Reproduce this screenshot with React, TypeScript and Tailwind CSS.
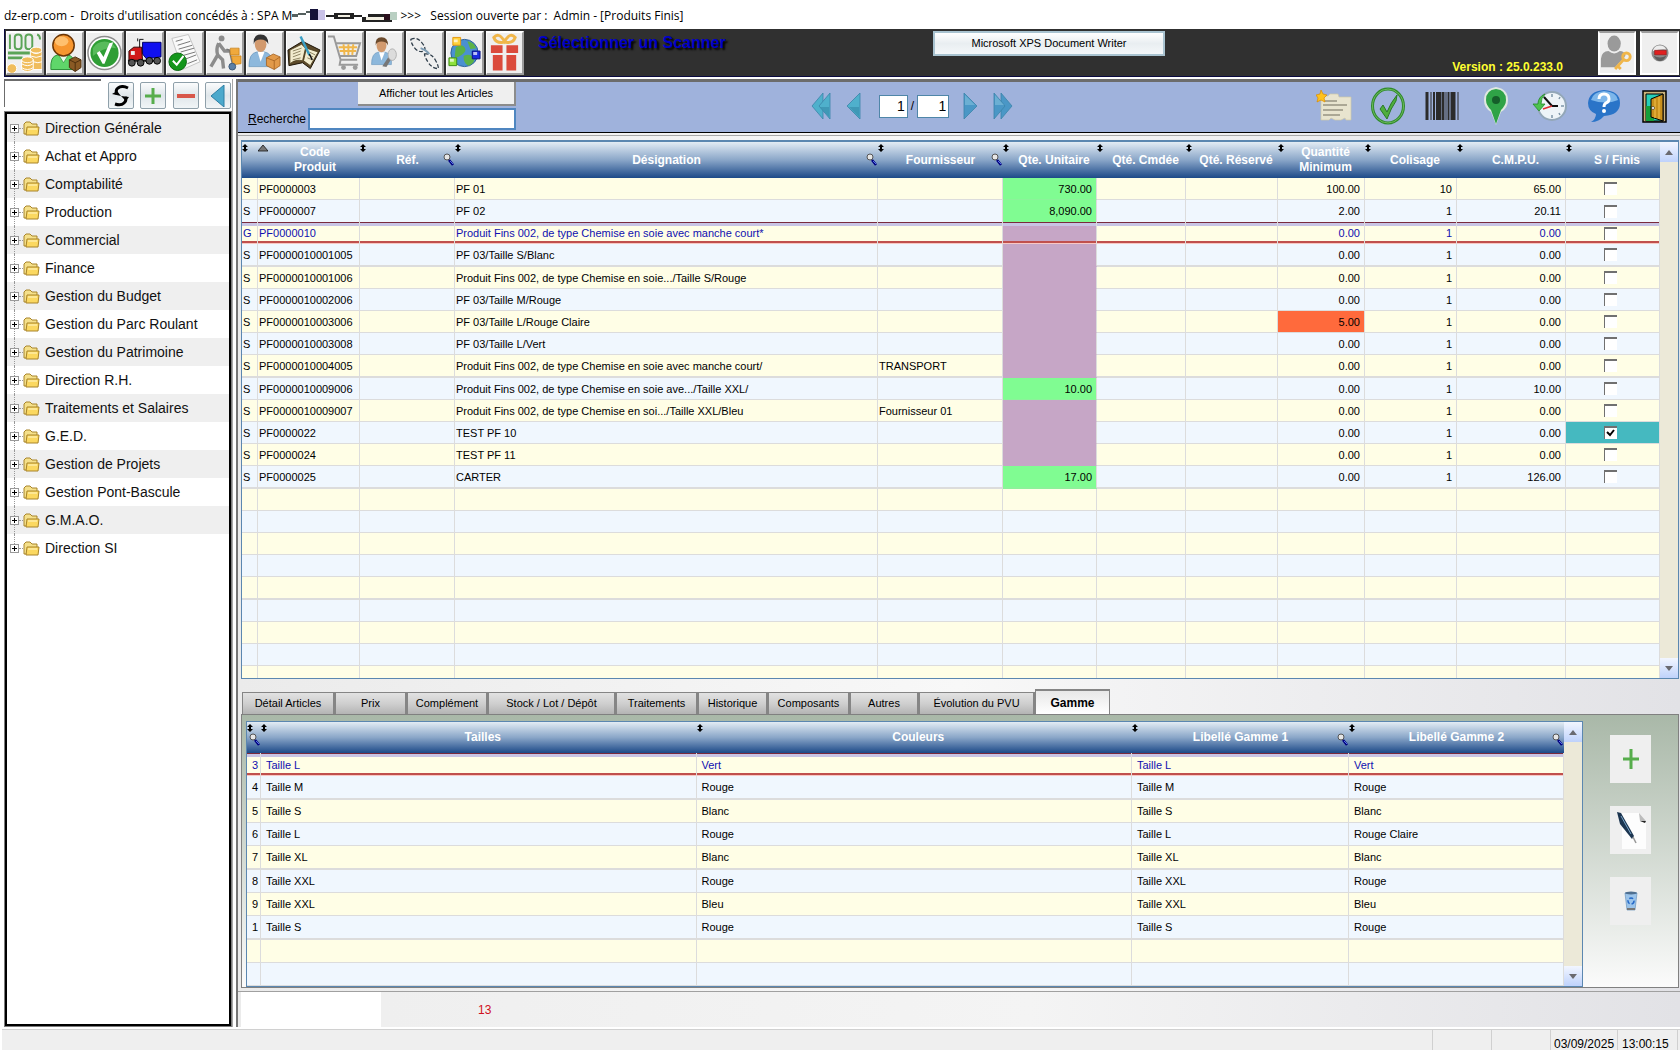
import { ReactNode, useState } from 'react'
import clsx from 'clsx'

type Product = {
  kind: string
  code: string
  label: string
  supplier?: string
  qty?: string
  min?: string
  pack?: string
  cost?: string
  done?: boolean
}

const products: Product[] = [
  { kind: 'S', code: 'PF0000003', label: 'PF 01', qty: '730.00', min: '100.00', pack: '10', cost: '65.00' },
  { kind: 'S', code: 'PF0000007', label: 'PF 02', qty: '8,090.00', min: '2.00', cost: '20.11' },
  { kind: 'G', code: 'PF0000010', label: 'Produit Fins 002, de type Chemise en soie avec manche court*' },
  { kind: 'S', code: 'PF0000010001005', label: 'PF 03/Taille S/Blanc' },
  { kind: 'S', code: 'PF0000010001006', label: 'Produit Fins 002, de type Chemise en soie.../Taille S/Rouge' },
  { kind: 'S', code: 'PF0000010002006', label: 'PF 03/Taille M/Rouge' },
  { kind: 'S', code: 'PF0000010003006', label: 'PF 03/Taille L/Rouge Claire', min: '5.00' },
  { kind: 'S', code: 'PF0000010003008', label: 'PF 03/Taille L/Vert' },
  { kind: 'S', code: 'PF0000010004005', label: 'Produit Fins 002, de type Chemise en soie avec manche court/', supplier: 'TRANSPORT' },
  { kind: 'S', code: 'PF0000010009006', label: 'Produit Fins 002, de type Chemise en soie ave.../Taille XXL/', qty: '10.00', cost: '10.00' },
  { kind: 'S', code: 'PF0000010009007', label: 'Produit Fins 002, de type Chemise en soi.../Taille XXL/Bleu', supplier: 'Fournisseur 01' },
  { kind: 'S', code: 'PF0000022', label: 'TEST PF 10', done: true },
  { kind: 'S', code: 'PF0000024', label: 'TEST PF 11' },
  { kind: 'S', code: 'PF0000025', label: 'CARTER', qty: '17.00', cost: '126.00' },
]

const variants = [
  ['3', 'Taille L', 'Vert', 'Taille L', 'Vert'],
  ['4', 'Taille M', 'Rouge', 'Taille M', 'Rouge'],
  ['5', 'Taille S', 'Blanc', 'Taille S', 'Blanc'],
  ['6', 'Taille L', 'Rouge', 'Taille L', 'Rouge Claire'],
  ['7', 'Taille XL', 'Blanc', 'Taille XL', 'Blanc'],
  ['8', 'Taille XXL', 'Rouge', 'Taille XXL', 'Rouge'],
  ['9', 'Taille XXL', 'Bleu', 'Taille XXL', 'Bleu'],
  ['1', 'Taille S', 'Rouge', 'Taille S', 'Rouge'],
  ['', '', '', '', ''],
  ['', '', '', '', ''],
]

const departments = [
  'Direction Générale',
  'Achat et Appro',
  'Comptabilité',
  'Production',
  'Commercial',
  'Finance',
  'Gestion du Budget',
  'Gestion du Parc Roulant',
  'Gestion du Patrimoine',
  'Direction R.H.',
  'Traitements et Salaires',
  'G.E.D.',
  'Gestion de Projets',
  'Gestion Pont-Bascule',
  'G.M.A.O.',
  'Direction SI',
]

type Column = { title: string; width: string; search?: boolean; sorted?: boolean; label?: string }

const productColumns: Column[] = [
  { title: '', width: 'w-[16px]' },
  { title: 'Code Produit', width: 'w-[102px]', sorted: true, label: 'pl-9 pr-6' },
  { title: 'Réf.', width: 'w-[95px]', search: true },
  { title: 'Désignation', width: '', search: true },
  { title: 'Fournisseur', width: 'w-[125px]', search: true },
  { title: 'Qte. Unitaire', width: 'w-[94px]', label: 'pl-2' },
  { title: 'Qté. Cmdée', width: 'w-[89px]', label: 'pl-2' },
  { title: 'Qté. Réservé', width: 'w-[92px]', label: 'pl-2' },
  { title: 'Quantité Minimum', width: 'w-[87px]', label: 'pl-5 pr-3' },
  { title: 'Colisage', width: 'w-[92px]', label: 'pl-2' },
  { title: 'C.M.P.U.', width: 'w-[109px]', label: 'pl-2' },
  { title: 'S / Finis', width: 'w-[94px]', label: 'pl-2' },
]

const variantColumns: Column[] = [
  { title: '', width: 'w-[14px]', search: true },
  { title: 'Tailles', width: '', label: 'pl-2' },
  { title: 'Couleurs', width: '', label: 'pl-2' },
  { title: 'Libellé Gamme 1', width: 'w-[217px]', search: true },
  { title: 'Libellé Gamme 2', width: 'w-[215px]', search: true },
]

const tabs = [
  { title: 'Détail Articles', width: 'w-[93px]' },
  { title: 'Prix', width: 'w-[72px]' },
  { title: 'Complément', width: 'w-[81px]' },
  { title: 'Stock / Lot / Dépôt', width: 'w-[128px]' },
  { title: 'Traitements', width: 'w-[82px]' },
  { title: 'Historique', width: 'w-[70px]' },
  { title: 'Composants', width: 'w-[82px]' },
  { title: 'Autres', width: 'w-[69px]' },
  { title: 'Évolution du PVU', width: 'w-[116px]' },
  { title: 'Gamme', width: 'w-[75px]' },
]

const selectedCell =
  'text-[#1010b0] shadow-[inset_0_1px_#7a2a3c,inset_0_4px_#c8c4e4,inset_0_-1px_#f8c8c4,inset_0_-3px_#c0504d]'

/* ---------- toolbar drawings ---------- */

function Svg({ children, className = 'size-9', box = '0 0 36 40' }: { children: ReactNode; className?: string; box?: string }) {
  return (
    <svg viewBox={box} className={className} fill="none" aria-hidden="true">
      {children}
    </svg>
  )
}

const MoneyIcon = () => (
  <Svg className="h-10 w-9">
    <path d="M3 1v15M8 4q0-3 3.500-3t3.500 3v9q0 3-3.500 3t-3.500-3zM19 4q0-3 3.500-3t3.500 3v9q0 3-3.500 3t-3.500-3zM31 1q3 1 3 5" stroke="#5ba457" strokeWidth="2" />
    <path d="M1 20h24M1 25h15" stroke="#5ba457" strokeWidth="3" />
    <g fill="#f0bd5c" stroke="#fff" strokeWidth="1">
      <path d="M24 18v19h12V18q-6 5-12 0z" />
      <ellipse cx="30" cy="17" rx="6" ry="3" />
      <path d="M15 27v10q6 4 12 0V27z" />
      <ellipse cx="21" cy="27" rx="6" ry="3" />
      <path d="M15 31q6 4 12 0M15 35q6 4 12 0M24 23q6 3 12 0M27 29q5 2 9 0" />
      <circle cx="5" cy="36" r="5" />
    </g>
  </Svg>
)

const BuyerIcon = () => (
  <Svg className="h-10 w-9">
    <path d="M4 37q-1-14 7-15h10q7 1 7 9v6z" fill="#5fd66a" stroke="#2b8f38" />
    <path d="m12 22 5 8 5-8z" fill="#eafbe9" stroke="#2b8f38" strokeWidth=".7" />
    <ellipse cx="17" cy="12" rx="11" ry="11" fill="#f7962f" stroke="#6b3606" strokeWidth="1.500" />
    <ellipse cx="15" cy="8" rx="7" ry="5" fill="#ffc06f" />
    <path d="m23 27 6-3 6 3v8l-6 4-6-4z" fill="#8a5a24" stroke="#4d2f0e" />
    <path d="m23 27 6 3 6-3M29 30v9" stroke="#4d2f0e" />
  </Svg>
)

const RoundCheckIcon = () => (
  <Svg className="h-10 w-9">
    <circle cx="18" cy="20" r="17" fill="#fff" stroke="#8d8d8d" strokeWidth="1.500" />
    <circle cx="18" cy="20" r="14.500" fill="#2f9e35" />
    <path d="M6 15a14 14 0 0 1 24 0q-11-2-24 8z" fill="#58bb5b" />
    <path d="m10 20 3-2 4 6 6-14 4-1-9 22h-2z" fill="#fff" />
  </Svg>
)

const TruckIcon = () => (
  <Svg className="h-10 w-9">
    <path d="M13 17V6h4M11 8V5" stroke="#111" strokeWidth="1" />
    <path d="M16 9h19v15l-15 2-4-5z" fill="#1010f0" stroke="#000060" />
    <path d="M2 18l5-4h8l1 14H2z" fill="#d01818" stroke="#300" />
    <path d="M4 18h4v4H4z" fill="#eee" />
    <path d="M1 28h33" stroke="#222" strokeWidth="2" />
    <g fill="#555" stroke="#000">
      <circle cx="5" cy="30" r="3.500" />
      <circle cx="14" cy="30" r="3.500" />
      <circle cx="23" cy="28" r="3.500" />
      <circle cx="31" cy="28" r="3.500" />
    </g>
  </Svg>
)

const OrderIcon = () => (
  <Svg className="h-10 w-9">
    <path d="M5 5 22 1l12 28-18 8z" fill="#fafafa" stroke="#c4c4c4" />
    <path d="m9 8 7-2m-5 6 13-4m-12 8 14-4m-12 7 14-4m-13 8 14-4m-12 8 13-5m-9 9 10-4" stroke="#777" strokeWidth="1" />
    <circle cx="11" cy="29" r="9" fill="#13961b" stroke="#0a6610" />
    <path d="m6 28 4 4 7-9" stroke="#fff" strokeWidth="2" />
  </Svg>
)

const DeliveryIcon = () => (
  <Svg className="h-10 w-9">
    <circle cx="15" cy="5" r="3" fill="#8c8c8c" />
    <path d="M12 10q-3 6-1 12L4 34M11 22l5 5 1 9M12 10l6 8h5" stroke="#8c8c8c" strokeWidth="3.500" />
    <path d="M20 16l3 1 3 14" stroke="#777" strokeWidth="1.500" />
    <path d="M24 15h9v7h-9zM25 23h10v8l-8 1z" fill="#f0a93c" stroke="#c47c12" strokeWidth=".7" />
    <circle cx="26" cy="34" r="3.500" fill="#5b7fa6" stroke="#3c5878" />
  </Svg>
)

const Man = ({ hair = '#6b4a2c' }) => (
  <>
    <path d="M2 34q0-14 8-15h8q7 1 8 10v5z" fill="#8db8dc" stroke="#5f90ba" strokeWidth=".7" />
    <path d="m11 19 3 10 4-10z" fill="#fff" />
    <ellipse cx="14" cy="11" rx="6" ry="8" fill="#d29a6e" />
    <path d="M7 11Q6 1 14 1t8 10q-2-5-8-5t-7 5z" fill={hair} />
  </>
)

const SupplierIcon = () => (
  <Svg className="h-10 w-9">
    <Man hair="#333" />
    <path d="m20 25 7-4 7 3v9l-6 4-8-4z" fill="#e29a4a" stroke="#a15f1d" strokeWidth=".8" />
    <path d="m20 25 8 3 6-4M28 28v9" stroke="#a15f1d" strokeWidth=".8" />
  </Svg>
)

const LedgerIcon = () => (
  <Svg className="h-10 w-9">
    <path d="M1 17 16 8l18 9-10 19-8-6L2 33z" fill="#5c4a2a" stroke="#1c1406" />
    <path d="m3 17 12-6 4 4-3 13q-7-2-13 3zM20 15l12 4-8 14-7-5z" fill="#f3edcf" stroke="#4a3a1a" strokeWidth=".8" />
    <path d="m6 18 9-3m-9 6 8-3m-8 6 8-3m-8 6 8-2m9-6 6 3m-7 0 5 2m-6 1 5 2" stroke="#8c8361" />
    <path d="m14 3 9 19" stroke="#3a9fc4" strokeWidth="2.500" />
    <path d="m23 21 3 6" stroke="#111" strokeWidth="1.500" />
  </Svg>
)

const CartIcon = () => (
  <Svg className="h-10 w-9">
    <path d="M1 3h6l7 24h17M9 10h25l-4 13H13M14 27l-1 5h19" stroke="#9a9a9a" strokeWidth="2" />
    <path d="M12 14h19M13 18h17M17 11l1 11M22 11v11M27 11l-1 11" stroke="#f0b64a" strokeWidth="2" />
    <circle cx="17" cy="35" r="2.500" fill="#9a9a9a" />
    <circle cx="29" cy="35" r="2.500" fill="#9a9a9a" />
  </Svg>
)

const ClientIcon = () => (
  <Svg className="h-10 w-9">
    <g transform="translate(3 3) scale(.85)">
      <Man />
      <path d="m15 36 8-12 3 3-6 10z" fill="#777" />
      <ellipse cx="27" cy="22" rx="5" ry="7" fill="#dcdcdc" stroke="#aaa" />
    </g>
  </Svg>
)

const ChainIcon = () => (
  <Svg className="h-10 w-9">
    <g stroke="#2d3b48" strokeWidth="1.300" strokeDasharray="4 2">
      <path d="M4 6q6-3 11 3t3 9q-6 2-10-3T4 6z" />
      <path d="M18 21q7-1 11 6t3 9q-6 0-10-6t-4-9z" />
    </g>
    <path d="M14 15q6 2 9 6" stroke="#7e9db4" strokeWidth="2" />
  </Svg>
)

const GlobeIcon = () => (
  <Svg className="h-10 w-9">
    <circle cx="18" cy="20" r="14" fill="#4a90d0" stroke="#2a5f98" />
    <path d="M9 14q6-4 9 0t-3 8-7 1zM17 23q7-3 10 2t-5 8q-5-2-5-10zM21 8q7 1 9 7l-6 1z" fill="#5cb245" />
    <path d="M6 4h8v8H6z" fill="#ffd23c" stroke="#e59a10" />
    <path d="M26 18h8v8h-8z" fill="#1c2ce0" stroke="#0a1480" />
    <path d="M2 25h8v8H2z" fill="#8ee03c" stroke="#3c8c10" />
    <path d="M7 6h4v3H7zM27 19h4v3h-4zM3 26h4v3H3z" fill="#fff" opacity=".7" />
  </Svg>
)

const GiftIcon = () => (
  <Svg className="h-10 w-9">
    <path d="M17 9Q9 10 7 4q5-6 11 4 6-10 11-4-2 6-10 5z" stroke="#f0b64a" strokeWidth="3" />
    <path d="M4 12h12v8H4zM20 12h12v8H20zM6 22h10v16H6zM20 22h10v16H20z" fill="#db4b3c" />
  </Svg>
)

const UserKeyIcon = () => (
  <Svg className="h-10 w-9">
    <ellipse cx="15" cy="10" rx="7" ry="8.500" fill="#9a9a9a" />
    <path d="M1 35V26q1-8 8-8 6 5 12 0 5 0 6 5L16 35z" fill="#9a9a9a" />
    <circle cx="28" cy="24" r="4" stroke="#f0b64a" strokeWidth="3" />
    <path d="m25 27-9 10m3-3 3 3" stroke="#f0b64a" strokeWidth="3" />
  </Svg>
)

const StopIcon = () => (
  <Svg className="size-[18px]" box="0 0 20 20">
    <circle cx="10" cy="10" r="9.500" fill="#8c8c8c" />
    <path d="M2 8a8 8 0 0 1 15-2q-7-1-15 2z" fill="#ededed" />
    <path d="M3 13q7 4 14 0-3 6-7 6t-7-6z" fill="#5d5d5d" />
    <path d="M4 7h13v5H4z" fill="#e02020" stroke="#8f1010" strokeWidth=".6" />
  </Svg>
)

const toolbarIcons = [
  { name: 'Caisse', Icon: MoneyIcon },
  { name: 'Acheteur', Icon: BuyerIcon },
  { name: 'Valider', Icon: RoundCheckIcon },
  { name: 'Transport', Icon: TruckIcon },
  { name: 'Commandes', Icon: OrderIcon },
  { name: 'Livraison', Icon: DeliveryIcon },
  { name: 'Fournisseurs', Icon: SupplierIcon },
  { name: 'Journal', Icon: LedgerIcon },
  { name: 'Ventes', Icon: CartIcon },
  { name: 'Clients', Icon: ClientIcon },
  { name: 'Liaisons', Icon: ChainIcon },
  { name: 'Réseau', Icon: GlobeIcon },
  { name: 'Cadeaux', Icon: GiftIcon },
]

const actionIcons = [
  {
    name: 'Nouveau',
    icon: (
      <Svg className="h-9 w-9" box="0 0 36 36">
        <path d="M5 8h7l2-2h8l1 3h12v23h-5l-1-2-4 2h-6l-4-2-2 2H5z" fill="#e8e4cf" stroke="#cfc9a8" strokeWidth=".7" />
        <path d="M9 13h12M7 17h24M7 22h20M7 27h17" stroke="#6e6b5c" strokeWidth="1.200" />
        <path d="m5 2 2 4 4 1-3 3 1 4-4-2-4 2 1-4-2-3 4-1z" fill="#ffc21c" stroke="#d88a00" strokeWidth=".7" />
      </Svg>
    ),
  },
  {
    name: 'Valider',
    icon: (
      <Svg className="h-10 w-9" box="0 0 36 40">
        <ellipse cx="18" cy="20" rx="15.500" ry="17" stroke="#2e8b2b" strokeWidth="3" />
        <ellipse cx="18" cy="20" rx="15.500" ry="17" stroke="#7fc46a" strokeWidth=".8" />
        <path d="m10 23 3-4 4 7q4-10 10-17l-1 6q-5 7-9 18z" fill="#4fae3c" stroke="#2a7a25" />
      </Svg>
    ),
  },
  {
    name: 'Code barres',
    icon: (
      <Svg className="h-9 w-9" box="0 0 36 36">
        <path d="M3 4v28M19 4v28" stroke="#2b2b2b" strokeWidth="3" />
        <path d="M7 4v28M22 4v28M34 4v28" stroke="#2b2b2b" strokeWidth="1" />
        <path d="M10 4v28M24.500 4v28" stroke="#2b2b2b" strokeWidth="2" />
        <path d="M14.500 4v28M29 4v28" stroke="#2b2b2b" strokeWidth="5" />
      </Svg>
    ),
  },
  {
    name: 'Emplacement',
    icon: (
      <Svg className="h-10 w-9" box="0 0 36 40">
        <path d="M18 1Q6 3 6 14q0 8 7 12l5 13 5-13q7-4 7-12Q30 3 18 1z" fill="#dfe8e0" />
        <path d="M18 3q-10 1-10 11 0 5 5 10l5 14 5-14q5-5 5-10Q28 4 18 3z" fill="#2fa347" />
        <circle cx="18" cy="14" r="4" fill="#155e2a" />
      </Svg>
    ),
  },
  {
    name: 'Historique',
    icon: (
      <Svg className="h-9 w-9" box="0 0 36 36">
        <circle cx="20" cy="18" r="14" fill="#eef4f8" stroke="#93a7b8" strokeWidth="2" />
        <path d="M20 6v3M20 27v3M8 18h3M29 18h3M12 9l1 2M28 27l-1-2M28 9l-1 2" stroke="#7d95a8" strokeWidth="1.500" />
        <path d="m12 9 8 9h6" stroke="#111" strokeWidth="2" />
        <path d="m20 18-9 3" stroke="#e03030" strokeWidth="1.500" />
        <path d="M13 6q-7 3-7 10H1l6 7 6-7H9q0-6 4-10z" fill="#4dc24f" stroke="#238a2a" strokeWidth=".8" />
      </Svg>
    ),
  },
  {
    name: 'Aide',
    icon: (
      <Svg className="h-9 w-9" box="0 0 36 36">
        <path d="M18 2q16 1 16 13T18 28q-5 6-13 6 5-3 5-8-8-3-8-11Q3 3 18 2z" fill="#2a74c8" />
        <path d="M18 3q13 1 14 9-12 5-27 0Q7 4 18 3z" fill="#7db6ea" />
        <path d="M13 11q0-5 5-5t5 5q0 3-3 4-2 1-2 4" stroke="#fff" strokeWidth="3" />
        <circle cx="18" cy="23" r="2" fill="#fff" />
      </Svg>
    ),
  },
  {
    name: 'Fermer',
    icon: (
      <Svg className="h-9 w-7" box="0 0 28 36">
        <path d="M3 3h23v31H3z" fill="#c9b27a" stroke="#000" strokeWidth="1.500" />
        <path d="M6 6h17v27H6z" fill="#26d0b8" stroke="#000" />
        <path d="M6 18h8v15H6z" fill="#14a03a" />
        <path d="M23 6v27l-12-4V11z" fill="#c8901c" stroke="#000" />
        <path d="M19 9v22M15 11v19" stroke="#e5b13c" strokeWidth="1.500" />
        <circle cx="13" cy="20" r="1.500" fill="#fff" stroke="#000" strokeWidth=".5" />
      </Svg>
    ),
  },
]

function PageArrow({ double, next, label }: { double?: boolean; next?: boolean; label: string }) {
  const fill = next ? '#4a97c6' : '#4fb0cc'
  const edge = next ? '#8cc8e0' : '#2f7fa0'
  return (
    <button type="button" aria-label={label}>
      <svg viewBox="0 0 20 28" className={clsx('h-7 w-5', next && 'rotate-180')} aria-hidden="true">
        <g fill={fill} stroke="#3b84a8" strokeWidth=".8">
          {double && <path d="M12 1v26L1 14z" />}
          {double ? <path d="M19 1v26L8 14z" /> : <path d="M17 1v26L4 14z" />}
        </g>
        <path d={double ? 'M18 15v10L9 15z' : 'M16 15v10L6 15z'} fill={edge} opacity=".5" />
      </svg>
    </button>
  )
}

const SortMark = () => (
  <svg viewBox="0 0 6 8" className="absolute top-[2px] left-0 h-2 w-[6px]" aria-hidden="true">
    <path d="M3 0l3 3H0zM3 8L0 5h6zM2 2h2v4H2z" fill="#000" />
  </svg>
)

const SortedMark = () => (
  <svg viewBox="0 0 10 7" className="absolute top-[3px] left-0 h-[7px] w-[10px]" aria-hidden="true">
    <path d="M5 0l5 6H0z" fill="#777" stroke="#111" strokeWidth=".8" />
  </svg>
)

const Magnifier = () => (
  <svg viewBox="0 0 12 13" className="absolute top-[11px] right-0 h-[13px] w-3" fill="none" aria-hidden="true">
    <circle cx="4" cy="4" r="3" fill="#e6e6e6" stroke="#555" />
    <path d="m6 7 4 5" stroke="#000080" strokeWidth="2.500" />
    <path d="m7 8 3 3" stroke="#6a8cff" strokeWidth=".8" />
  </svg>
)

function HeaderRow({ columns, height }: { columns: Column[]; height: string }) {
  return (
    <tr>
      {columns.map((column) => (
        <th
          key={column.title}
          scope="col"
          className={clsx(
            'relative bg-linear-to-b from-[#e3ecf4] via-[#8aa6c8] to-[#1c4a88] p-0 text-[12px] leading-[15px] font-bold text-white',
            height,
            column.width,
          )}
        >
          {column.sorted ? <SortedMark /> : <SortMark />}
          <span className={clsx('block', column.label)}>{column.title}</span>
          {column.search && <Magnifier />}
        </th>
      ))}
    </tr>
  )
}

const scrollButton = 'flex h-5 items-center justify-center bg-linear-to-b from-[#f2f6ff] to-[#bfd2fb]'

function ScrollBar() {
  return (
    <div className="flex w-[18px] shrink-0 flex-col justify-between bg-[#ece9d8]">
      <button type="button" aria-label="Défiler vers le haut" className={scrollButton}>
        <svg viewBox="0 0 8 5" className="h-[5px] w-2"><path d="M4 0l4 5H0z" fill="#6a6a70" /></svg>
      </button>
      <button type="button" aria-label="Défiler vers le bas" className={scrollButton}>
        <svg viewBox="0 0 8 5" className="h-[5px] w-2"><path d="M4 5L0 0h8z" fill="#6a6a70" /></svg>
      </button>
    </div>
  )
}

function ProductGrid() {
  // blank lines keep the striping going down to the bottom edge
  const rows: (Product | null)[] = [...products, ...Array<null>(9).fill(null)]

  return (
    <div className="flex min-h-0 flex-1 border border-t-2 border-[#5b87b0] bg-white">
      <div className="min-w-0 flex-1 overflow-hidden">
        <table className="w-full table-fixed border-separate border-spacing-0 text-[11px] leading-[18px]">
          <thead>
            <HeaderRow columns={productColumns} height="h-[36px]" />
          </thead>
          <tbody>
            {rows.map((row, i) => {
              const cell = clsx(
                'border-r border-[#dcdcdc] px-[1px] py-0 whitespace-nowrap',
                i % 5 === 3 ? 'h-[23px] border-b-2' : i === 1 || i === 2 ? 'h-[22px]' : 'h-[22px] border-b',
                i === 2 && selectedCell,
              )
              const num = clsx(cell, 'pr-[4px] text-right')
              return (
                <tr key={i} className={i % 2 ? 'bg-[#f0f7fe]' : 'bg-[#fffee6]'}>
                  <td className={cell}>{row?.kind}</td>
                  <td className={cell}>{row?.code}</td>
                  <td className={cell} />
                  <td className={cell}>{row?.label}</td>
                  <td className={cell}>{row?.supplier}</td>
                  <td className={clsx(num, row && (row.qty ? 'border-b-[#8cf29a] bg-[#80fc92]' : 'border-b-[#c6a6c6] bg-[#c6a6c6]'))}>{row?.qty}</td>
                  <td className={num} />
                  <td className={num} />
                  <td className={clsx(num, row?.min === '5.00' && 'bg-[#ff6a3c]')}>{row && (row.min ?? '0.00')}</td>
                  <td className={num}>{row && (row.pack ?? '1')}</td>
                  <td className={num}>{row && (row.cost ?? '0.00')}</td>
                  <td className={clsx(cell, row?.done && 'bg-[#45b9c0]')}>
                    {row && (
                      <label className="flex items-center justify-center pr-1">
                        <input
                          type="checkbox"
                          defaultChecked={row.done}
                          aria-label={`${row.code} fini`}
                          className="peer size-[13px] appearance-none border-t-2 border-l border-[#707070] bg-white"
                        />
                        <svg viewBox="0 0 13 13" className="invisible -ml-[13px] size-[13px] peer-checked:visible" fill="none" aria-hidden="true">
                          <path d="m3 6 3 3 4-5" stroke="#000" strokeWidth="2" />
                        </svg>
                      </label>
                    )}
                  </td>
                </tr>
              )
            })}
          </tbody>
        </table>
      </div>
      <ScrollBar />
    </div>
  )
}

function VariantGrid() {
  return (
    <div className="flex min-w-0 flex-1 border border-[#5b87b0] bg-white">
      <div className="min-w-0 flex-1 overflow-hidden">
        <table className="w-full table-fixed border-separate border-spacing-0 text-[11px] leading-[18px]">
          <thead>
            <HeaderRow columns={variantColumns} height="h-[31px]" />
          </thead>
          <tbody>
            {variants.map((row, i) => (
              <tr key={i} className={i % 2 ? 'bg-[#f0f7fe]' : 'bg-[#fffee6]'}>
                {row.map((value, j) => (
                  <td
                    key={j}
                    className={clsx(
                      'border-r border-[#dcdcdc] py-0 whitespace-nowrap',
                      j === 0 ? 'pr-[2px] text-right' : 'px-[5px]',
                      i % 3 === 1 ? 'h-6 border-b-2' : i === 0 ? 'h-[23px]' : 'h-[23px] border-b',
                      i === 0 && selectedCell,
                    )}
                  >
                    {value}
                  </td>
                ))}
              </tr>
            ))}
          </tbody>
        </table>
      </div>
      <ScrollBar />
    </div>
  )
}

function Folder() {
  return (
    <svg viewBox="0 0 17 15" className="h-[15px] w-[17px]" aria-hidden="true">
      <path d="M1 13V3l2-2h4l2 2h5v10z" fill="#f5e08a" stroke="#a8842a" />
      <path d="M3 14 4 6h12l-1 8z" fill="#fbd860" stroke="#a8842a" />
      <path d="M5 8h9" stroke="#fff6c8" />
    </svg>
  )
}

const smallButton =
  'flex h-[27px] w-[26px] items-center justify-center rounded-[2px] border border-[#8fa0aa] bg-linear-to-b from-[#fbfcfd] via-[#dfe6ea] to-[#f1f5f7]'

function Sidebar() {
  return (
    <aside className="flex w-[228px] shrink-0 flex-col">
      <div className="flex items-start gap-[7px] pb-[2px]">
        <input aria-label="Filtrer le menu" className="h-[28px] w-[97px] border-t-2 border-l border-[#6c6c6c] bg-white px-1 text-[12px] outline-none" />
        <div className="flex flex-1 justify-between pt-[3px] pr-px">
          <button type="button" aria-label="Actualiser" className={smallButton}>
            <svg viewBox="0 0 20 22" className="h-[22px] w-5" fill="none" aria-hidden="true">
              <path d="M17 3Q11 0 7 3 4 5 6 9M4 19q6 2 9-1 3-2 1-6" stroke="#000" strokeWidth="3" />
              <path d="M1 9l5-3 4 5zM18 12l-8-1 5 5z" fill="#000" />
            </svg>
          </button>
          <button type="button" aria-label="Déplier" className={smallButton}>
            <svg viewBox="0 0 16 16" className="size-4" aria-hidden="true"><path d="M8 0v16M0 8h16" stroke="#57ad4c" strokeWidth="3" /></svg>
          </button>
          <button type="button" aria-label="Replier" className={smallButton}>
            <svg viewBox="0 0 18 16" className="h-4 w-[18px]" aria-hidden="true"><path d="M0 8h18" stroke="#d8574a" strokeWidth="4" /></svg>
          </button>
          <button type="button" aria-label="Masquer le menu" className={smallButton}>
            <svg viewBox="0 0 16 22" className="h-[22px] w-4" aria-hidden="true"><path d="M14 0v22L1 11z" fill="#4ba9cc" stroke="#2d7fa5" /></svg>
          </button>
        </div>
      </div>
      <nav className="flex-1 border border-[#7c7c7c] bg-black p-[2px]">
        <ul className="h-full bg-white text-[14px] leading-[28px] text-[#111]">
          {departments.map((name, i) => (
            <li key={name} className={clsx('flex h-[28px] items-center', i % 2 === 0 && 'bg-[#efefef]')}>
              <span className="relative flex h-full w-3 shrink-0 items-center justify-end">
                <span className={clsx('absolute right-[4px] border-l border-dotted border-[#999]', i === 0 ? 'top-1/2 bottom-0' : i === 15 ? 'top-0 bottom-1/2' : 'inset-y-0')} />
                <button type="button" aria-label={`Ouvrir ${name}`} className="relative flex size-[9px] items-center justify-center border border-[#999] bg-white">
                  <svg viewBox="0 0 5 5" className="size-[5px]"><path d="M2 0h1v5H2zM0 2h5v1H0z" fill="#000" /></svg>
                </button>
              </span>
              <span className="w-1 border-t border-dotted border-[#999]" />
              <Folder />
              <span className="pl-[5px]">{name}</span>
            </li>
          ))}
        </ul>
      </nav>
    </aside>
  )
}

const pageInput = 'h-[23px] border border-[#4f86a8] bg-white px-[2px] text-right text-[14px] outline-none'

function ActionBar() {
  return (
    <div className="flex h-[54px] shrink-0 items-start border-t-[3px] border-b border-t-[#6c6c6c] border-b-black bg-[#9fb2dc] pl-[10px] text-[12px]">
      <div className="flex w-[268px] flex-col items-end">
        <button type="button" className="h-6 w-[158px] border-r-2 border-b-2 border-[#8c8c8c] bg-[#efefef] pt-px text-[11px]">
          Afficher tout les Articles
        </button>
        <div className="flex w-full items-center justify-between pt-[2px]">
          <label htmlFor="recherche">
            <u>R</u>echerche
          </label>
          <input id="recherche" className="h-[22px] w-[208px] border-2 border-[#4f86c0] bg-white px-1 outline-none" />
        </div>
      </div>
      <div className="flex flex-1 justify-center pt-[10px] pr-2">
        <div className="flex items-center gap-3">
          <PageArrow double label="Première page" />
          <PageArrow label="Page précédente" />
          <div className="flex items-center gap-[3px] pl-1">
            <input aria-label="Page" defaultValue="1" className={clsx(pageInput, 'w-[29px]')} />
            <span>/</span>
            <input aria-label="Nombre de pages" defaultValue="1" className={clsx(pageInput, 'w-[32px]')} />
          </div>
          <PageArrow next label="Page suivante" />
          <PageArrow next double label="Dernière page" />
        </div>
      </div>
      <div className="flex items-center gap-[18px] pt-1 pr-3">
        {actionIcons.map(({ name, icon }) => (
          <button key={name} type="button" aria-label={name} className="flex h-10 items-center">
            {icon}
          </button>
        ))}
      </div>
    </div>
  )
}

const sideButton = 'flex h-[48px] w-[41px] items-center justify-center bg-[#efefef]'

function DetailPanel() {
  const [active, setActive] = useState('Gamme')

  return (
    <section className="shrink-0 pt-[10px]">
      <div role="tablist" className="flex h-[25px] items-end pl-px text-[11px]">
        {tabs.map((tab) => (
          <button
            key={tab.title}
            type="button"
            role="tab"
            aria-selected={tab.title === active}
            onClick={() => setActive(tab.title)}
            className={clsx(
              'shrink-0 whitespace-nowrap border-[#858585]',
              tab.width,
              tab.title === active
                ? 'h-[25px] border-t-2 border-r border-l bg-linear-to-b from-[#e8e8e8] to-white text-[12px] font-bold'
                : 'h-[22px] border-t border-r-2 border-l bg-linear-to-b from-[#e2e2e2] via-[#cfcfcf] to-[#b4b4b4]',
            )}
          >
            {tab.title}
          </button>
        ))}
      </div>
      <div className="flex border border-[#808080] bg-linear-to-b from-[#a9b8a8] to-[#fbfbfb] pt-[6px] pl-1">
        <VariantGrid />
        <div className="flex w-[95px] flex-col items-center gap-[23px] pt-[14px]">
          <button type="button" aria-label="Ajouter" className={sideButton}>
            <svg viewBox="0 0 16 20" className="h-5 w-4" aria-hidden="true"><path d="M8 0v20M0 10h16" stroke="#57ad4c" strokeWidth="3" /></svg>
          </button>
          <button type="button" aria-label="Modifier" className={sideButton}>
            <svg viewBox="0 0 34 42" className="h-[42px] w-[34px]" fill="none" aria-hidden="true">
              <path d="M8 4h17l7 8v28H8z" fill="#fdfdfd" />
              <path d="m25 4 1 8h6z" fill="#bbb" />
              <path d="m26 12 6 0-1 2z" fill="#222" />
              <path d="m3 3 4 1 13 23-2 3L6 15z" fill="#1c3550" />
              <path d="m7 7 10 18" stroke="#7aa5c8" />
              <path d="m19 28 3 6" stroke="#999" strokeWidth="1.500" />
            </svg>
          </button>
          <button type="button" aria-label="Supprimer" className={sideButton}>
            <svg viewBox="0 0 14 20" className="h-5 w-[14px]" fill="none" aria-hidden="true">
              <path d="M1 2h12l-2 17H3z" fill="#9cc4ea" stroke="#6b95bd" strokeWidth=".7" />
              <ellipse cx="7" cy="2" rx="6" ry="1.500" fill="#4f6f90" />
              <circle cx="7" cy="10" r="3" stroke="#2468c8" strokeWidth="1.500" strokeDasharray="4 2" />
              <path d="M3 18h8" stroke="#777" strokeWidth="2" />
            </svg>
          </button>
        </div>
      </div>
    </section>
  )
}

function TitleBar() {
  return (
    <header className="flex h-[29px] shrink-0 items-center pt-[3px] pl-1 font-['Open_Sans','Noto_Sans',sans-serif] text-[12px] whitespace-pre">
      <span>dz-erp.com -  Droits d'utilisation concédés à : SPA M</span>
      <svg viewBox="0 0 108 14" className="h-[14px] w-[108px]" aria-hidden="true">
        <path d="M0 5h6V4h8V2h10v2H14v2H6v2H0z" fill="#55605f" />
        <path d="M18 0h8v11h-8z" fill="#15123a" />
        <path d="M26 1h7v10h-7z" fill="#c9c2e8" />
        <path d="M34 6h36v2H34zM42 4h20v6H42zM70 8h30v5H70zM76 5h22v4H76z" fill="#222" />
        <path d="M46 6h12v2H46zM74 8h18v3H74z" fill="#f2efe2" />
        <path d="M98 3h7v8h-7z" fill="#b9cfc2" />
        <path d="M92 5h6v6h-6z" fill="#2a0f1c" />
      </svg>
      <span>{'>>>   Session ouverte par :  Admin - [Produits Finis]'}</span>
    </header>
  )
}

function MainToolbar() {
  return (
    <div className="ml-1 flex h-12 shrink-0 border-b border-l border-[#0a0a40] bg-[#303030] pt-[2px]">
      <div className="flex gap-[2px] pl-[1px]">
        {toolbarIcons.map(({ name, Icon }) => (
          <button
            key={name}
            type="button"
            aria-label={name}
            className="flex h-[44px] w-[38px] items-center justify-center border-t-2 border-r-2 border-b-2 border-l border-t-white border-r-[#9c9c9c] border-b-[#9c9c9c] border-l-white bg-[#efefef]"
          >
            <Icon />
          </button>
        ))}
      </div>
      <div className="w-[409px] pt-[2px] pl-[14px] text-[16px] leading-5 font-bold text-[#0000c8] [text-shadow:2px_2px_2px_#000]">
        Sélectionner un Scanner
      </div>
      <button
        type="button"
        className="h-[25px] w-[232px] border-2 border-[#a9c3d0] bg-linear-to-b from-white via-[#e9eef1] to-[#f4f7f9] text-[11px]"
      >
        Microsoft XPS Document Writer
      </button>
      <div className="flex flex-1 items-end justify-end gap-[4px] pr-px pb-[1px]">
        <span className="pr-[31px] pb-[1px] text-[12px] leading-[14px] font-bold text-[#ffff30]">Version : 25.0.233.0</span>
        <button type="button" aria-label="Utilisateur" className="flex h-[44px] w-[38px] items-center justify-center border-2 border-white border-t-[#9c9c9c] bg-[#efefef]">
          <UserKeyIcon />
        </button>
        <button type="button" aria-label="Quitter" className="flex h-[44px] w-[39px] items-center justify-center border-2 border-white border-t-[#9c9c9c] bg-[#efefef]">
          <StopIcon />
        </button>
      </div>
    </div>
  )
}

export default function App() {
  return (
    <div className="flex h-screen flex-col overflow-hidden bg-white font-['Liberation_Sans',Arial,sans-serif] text-black">
      <TitleBar />
      <MainToolbar />
      <div className="flex min-h-0 flex-1 pt-[2px] pb-[2px] pl-1">
        <Sidebar />
        <div className="w-1 shrink-0 border-l border-[#a8a8a8]" />
        <main className="flex min-w-0 flex-1 flex-col border-l-2 border-[#757575] bg-linear-to-r from-[#ebebeb] via-[#f8f8f8] to-[#e2e2e6]">
          <ActionBar />
          <div className="mt-[2px] flex min-h-0 flex-1 flex-col border-t border-[#a8a8a8] pt-1 pr-[1px] pb-[3px] pl-[3px]">
            <ProductGrid />
            <DetailPanel />
          </div>
          <div className="flex h-[36px] shrink-0 border-t border-[#a0a0a0] pl-[3px]">
            <div className="w-[140px] bg-white" />
            <output className="flex flex-1 items-center bg-linear-to-r from-[#efefef] via-[#f4f4f4] to-[#e2e2e6] pl-[97px] text-[12px] text-[#d01020]">
              13
            </output>
          </div>
        </main>
      </div>
      <footer className="ml-[2px] flex h-[21px] shrink-0 justify-end border-t border-[#d0d0d0] bg-[#efefef] text-[12px] leading-[28px]">
        <div className="w-[59px] border-l border-[#d0d0d0]" />
        <div className="w-[59px] border-l border-[#d0d0d0]" />
        <div className="w-[67px] border-l border-[#d0d0d0] pl-[3px] whitespace-nowrap">03/09/2025</div>
        <div className="w-[60px] border-l border-[#d0d0d0] pl-[4px] whitespace-nowrap">13:00:15</div>
        <div className="w-[3px] border-l border-[#d0d0d0]" />
      </footer>
    </div>
  )
}
